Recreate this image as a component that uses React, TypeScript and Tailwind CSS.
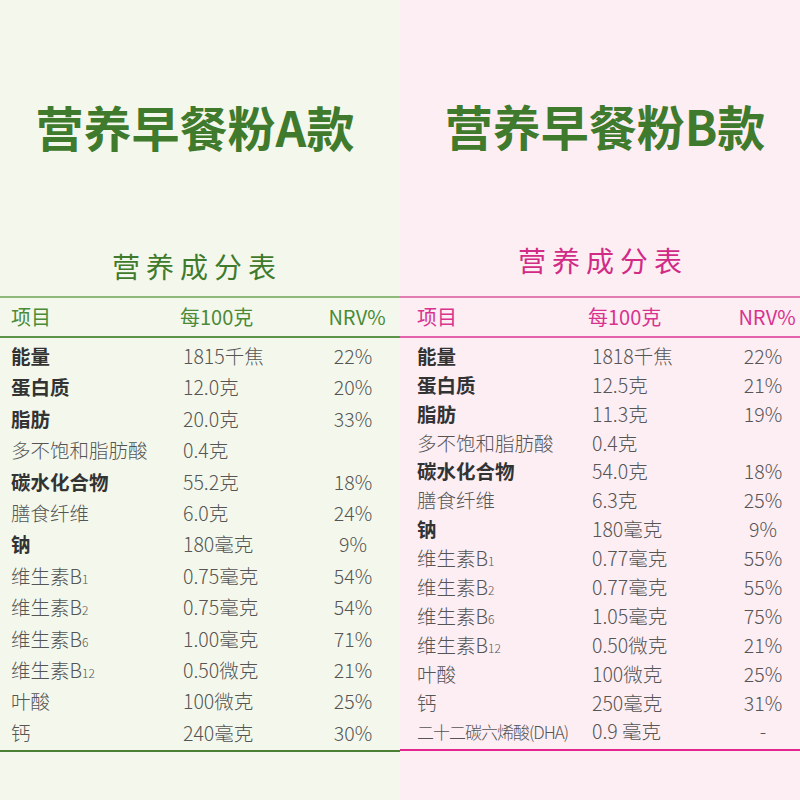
import React from "react";

type Row = { label: React.ReactNode; value: string; nrv: string; bold?: boolean };

const B = (main: string, sub: string) => (
  <span>
    {main}
    <span className="text-[12px]">{sub}</span>
  </span>
);

const rowsA: Row[] = [
  { label: "能量", value: "1815千焦", nrv: "22%", bold: true },
  { label: "蛋白质", value: "12.0克", nrv: "20%", bold: true },
  { label: "脂肪", value: "20.0克", nrv: "33%", bold: true },
  { label: "多不饱和脂肪酸", value: "0.4克", nrv: "" },
  { label: "碳水化合物", value: "55.2克", nrv: "18%", bold: true },
  { label: "膳食纤维", value: "6.0克", nrv: "24%" },
  { label: "钠", value: "180毫克", nrv: "9%", bold: true },
  { label: B("维生素B", "1"), value: "0.75毫克", nrv: "54%" },
  { label: B("维生素B", "2"), value: "0.75毫克", nrv: "54%" },
  { label: B("维生素B", "6"), value: "1.00毫克", nrv: "71%" },
  { label: B("维生素B", "12"), value: "0.50微克", nrv: "21%" },
  { label: "叶酸", value: "100微克", nrv: "25%" },
  { label: "钙", value: "240毫克", nrv: "30%" },
];

const rowsB: Row[] = [
  { label: "能量", value: "1818千焦", nrv: "22%", bold: true },
  { label: "蛋白质", value: "12.5克", nrv: "21%", bold: true },
  { label: "脂肪", value: "11.3克", nrv: "19%", bold: true },
  { label: "多不饱和脂肪酸", value: "0.4克", nrv: "" },
  { label: "碳水化合物", value: "54.0克", nrv: "18%", bold: true },
  { label: "膳食纤维", value: "6.3克", nrv: "25%" },
  { label: "钠", value: "180毫克", nrv: "9%", bold: true },
  { label: B("维生素B", "1"), value: "0.77毫克", nrv: "55%" },
  { label: B("维生素B", "2"), value: "0.77毫克", nrv: "55%" },
  { label: B("维生素B", "6"), value: "1.05毫克", nrv: "75%" },
  { label: B("维生素B", "12"), value: "0.50微克", nrv: "21%" },
  { label: "叶酸", value: "100微克", nrv: "25%" },
  { label: "钙", value: "250毫克", nrv: "31%" },
  { label: <span className="tracking-[-1px] text-[17px]">二十二碳六烯酸(DHA)</span>, value: "0.9 毫克", nrv: "-" },
];

const font = { fontFamily: '"Noto Sans CJK SC", "Noto Sans", sans-serif' };

export default function App() {
  return (
    <div className="flex w-[800px] h-[800px]" style={font}>
      {/* Left panel */}
      <div className="w-[400px] h-[800px] bg-[#f4f8ec] flex flex-col">
        <div className="h-[296px] flex flex-col items-center">
          <div className="mt-[96px] h-[60px] leading-[60px] text-[48px] font-bold text-[#3f7a2d] pr-[10px]">
            营养早餐粉A款
          </div>
          <div className="mt-[92px] h-[36px] leading-[36px] text-[28px] text-[#3f7a2d] tracking-[6px] pr-[6px]">
            营养成分表
          </div>
        </div>
        <div className="border-t-2 border-[#8fb97c]" />
        <div className="h-[38px] flex items-center text-[20px] text-[#4b8a38]">
          <div className="pl-[11px] w-[180px]">项目</div>
          <div className="w-[147px]">每100克</div>
          <div className="w-[60px] text-center">NRV%</div>
        </div>
        <div className="border-t-2 border-[#5c9448]" />
        <div className="pt-[2px] pb-[2px]">
          {rowsA.map((r, i) => (
            <div key={i} className="h-[31.4px] flex items-center text-[19.5px]">
              <div
                className={`pl-[11px] w-[183px] ${r.bold ? "font-bold text-[#333333]" : "font-light text-[#555555]"}`}
              >
                {r.label}
              </div>
              <div className="w-[130px] font-light text-[#555555]">{r.value}</div>
              <div className="w-[80px] text-center font-light text-[#555555]">{r.nrv}</div>
            </div>
          ))}
        </div>
        <div className="border-t-2 border-[#4b7f33]" />
      </div>

      {/* Right panel */}
      <div className="w-[400px] h-[800px] bg-[#fdeef4] flex flex-col">
        <div className="h-[296px] flex flex-col items-center">
          <div className="mt-[95px] h-[60px] leading-[60px] text-[48px] font-bold text-[#3f7a2d] pl-[10px]">
            营养早餐粉B款
          </div>
          <div className="mt-[87px] h-[36px] leading-[36px] text-[28px] text-[#d12b86] tracking-[6px] pl-[6px]">
            营养成分表
          </div>
        </div>
        <div className="border-t-2 border-[#e27cb3]" />
        <div className="h-[38px] flex items-center text-[20px] text-[#d8338f]">
          <div className="pl-[17px] w-[188px]">项目</div>
          <div className="w-[149px]">每100克</div>
          <div className="w-[60px] text-center">NRV%</div>
        </div>
        <div className="border-t-2 border-[#e262ab]" />
        <div className="pt-[3px] pb-[4px]">
          {rowsB.map((r, i) => (
            <div key={i} className="h-[28.9px] flex items-center text-[19.5px]">
              <div
                className={`pl-[17px] w-[192px] whitespace-nowrap ${r.bold ? "font-bold text-[#333333]" : "font-light text-[#555555]"}`}
              >
                {r.label}
              </div>
              <div className="w-[136px] font-light text-[#555555]">{r.value}</div>
              <div className="w-[70px] text-center font-light text-[#555555]">{r.nrv}</div>
            </div>
          ))}
        </div>
        <div className="border-t-2 border-[#e3268f]" />
      </div>
    </div>
  );
}
